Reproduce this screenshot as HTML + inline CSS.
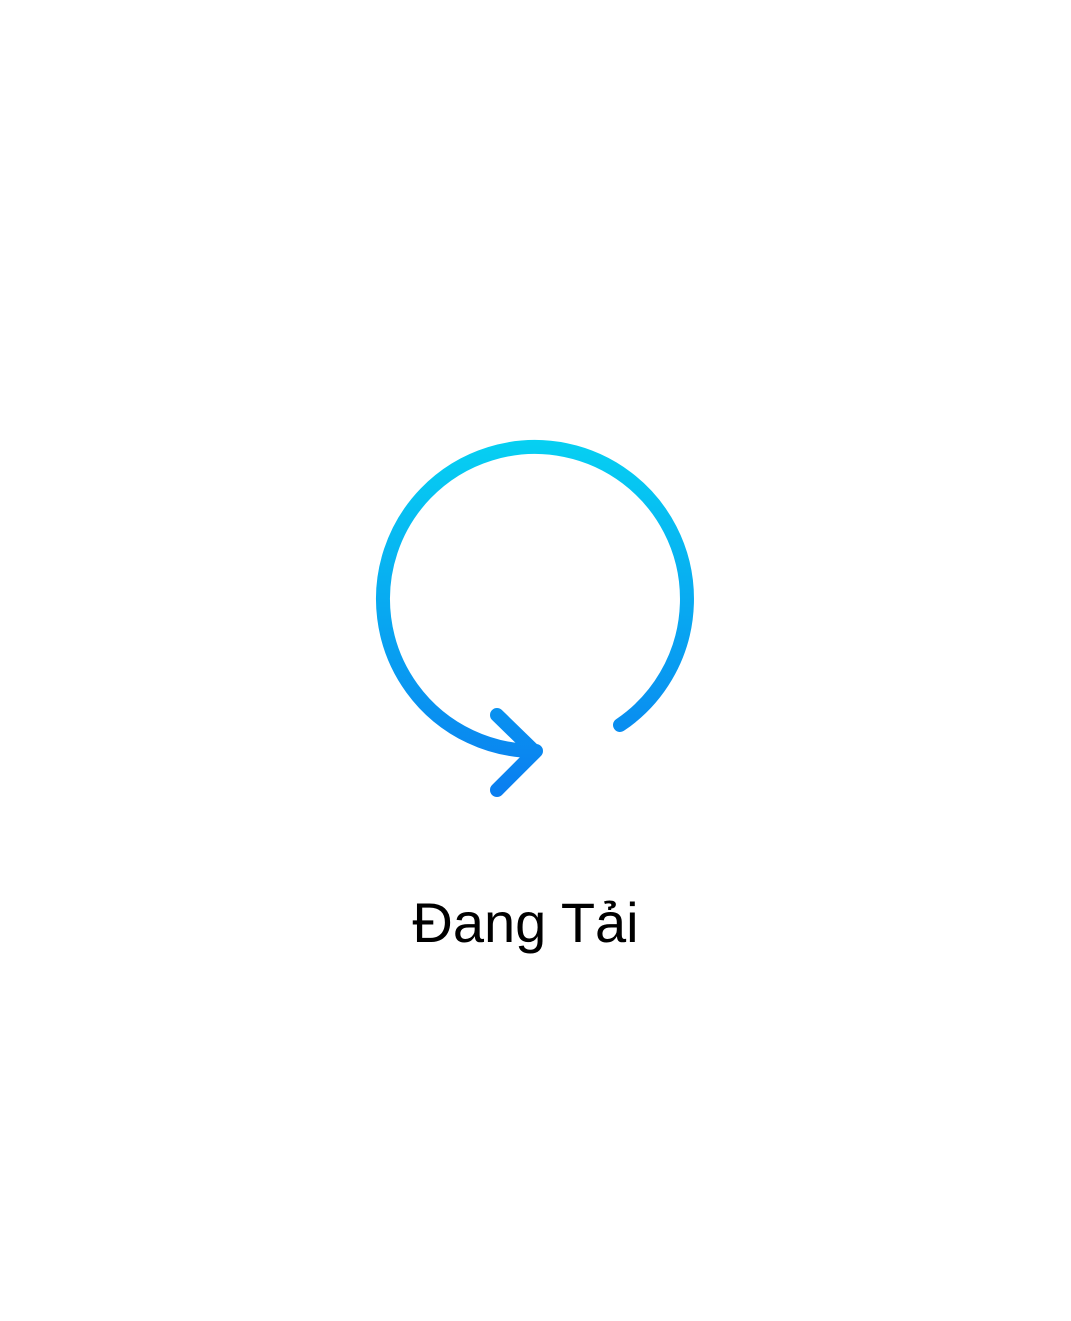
<!DOCTYPE html>
<html><head><meta charset="utf-8"><style>
html,body{margin:0;padding:0;background:#fff;width:1071px;height:1321px;overflow:hidden;position:relative}
svg{position:absolute;left:0;top:0}
.t{position:absolute;left:0;width:1071px;top:888px;text-align:center;font-family:"Liberation Sans",sans-serif;font-size:56px;line-height:70px;color:#000;padding-right:20px;box-sizing:border-box}
</style></head><body>
<svg width="1071" height="1321" viewBox="0 0 1071 1321">
<defs><linearGradient id="g" x1="0" y1="440" x2="0" y2="795" gradientUnits="userSpaceOnUse">
<stop offset="0" stop-color="#06d0f2"/><stop offset="1" stop-color="#0a7ef0"/></linearGradient></defs>
<g fill="none" stroke="url(#g)" stroke-width="14" stroke-linecap="round" stroke-linejoin="round">
<path d="M620 725 A152 152 0 1 0 536 751"/>
<path d="M497 715 L535 752 L497 790"/>
</g>
</svg>
<div class="t">Đang Tải</div>
</body></html>
